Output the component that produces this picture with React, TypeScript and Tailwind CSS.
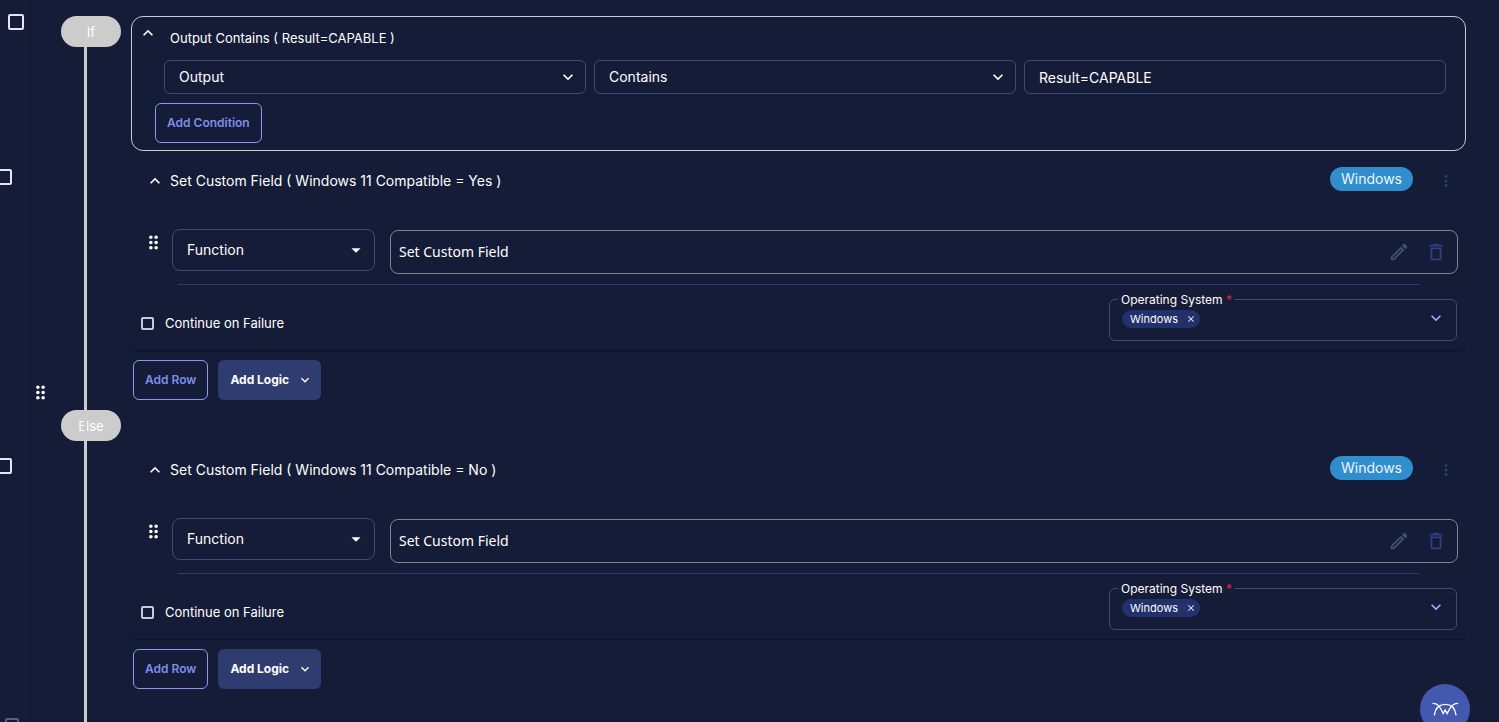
import type { ReactNode } from 'react'
import {
  MdArrowDropDown,
  MdClose,
  MdDeleteOutline,
  MdDragIndicator,
  MdExpandLess,
  MdExpandMore,
  MdMoreVert,
  MdOutlineEdit,
} from 'react-icons/md'

const RAIL_CHECKBOX = 'block shrink-0 appearance-none rounded-xs border-2'

function SelectionRail() {
  return (
    <aside className="flex w-[30px] shrink-0 flex-col overflow-hidden border-r border-[#131932] pt-3.5">
      <input type="checkbox" aria-label="Select condition" className={`${RAIL_CHECKBOX} ml-2 size-4 border-[#e3e6f5]`} />
      <input type="checkbox" aria-label="Select first row" className={`${RAIL_CHECKBOX} mt-[139px] -ml-1 size-4 border-[#e3e6f5]`} />
      <input type="checkbox" aria-label="Select second row" className={`${RAIL_CHECKBOX} mt-[273px] -ml-1 size-4 border-[#e3e6f5]`} />
      <input type="checkbox" aria-label="Select next row" className={`${RAIL_CHECKBOX} mt-[244px] ml-[5px] size-3.5 border-[#5b6078]`} />
    </aside>
  )
}

function ConditionSelect({ label, value }: { label: string; value: string }) {
  return (
    <div className="relative">
      <select
        aria-label={label}
        className="h-[34px] w-full appearance-none rounded-md border border-[#3e4a7a] bg-transparent px-3.5 text-sm text-white"
      >
        <option>{value}</option>
      </select>
      <MdExpandMore className="pointer-events-none absolute top-[7px] right-2 size-5" />
    </div>
  )
}

function OutlineButton({ children }: { children: ReactNode }) {
  return (
    <button className="h-10 rounded-md border border-[#869bed] px-[11px] text-xs font-semibold text-[#7b8fec]">
      {children}
    </button>
  )
}

function ConditionBox() {
  return (
    <section className="flex h-[135px] rounded-xl border border-[#cccccc] pr-[19px]">
      <button aria-label="Collapse condition" className="h-8 w-[23px] shrink-0 pl-1.5">
        <MdExpandLess className="size-5" />
      </button>
      <div className="flex-1">
        <h2 className="mt-[11px] ml-[15px] text-[13px] leading-5">Output Contains ( Result=CAPABLE )</h2>
        <div className="mt-3 ml-[9px] grid grid-cols-3 gap-2">
          <ConditionSelect label="Source" value="Output" />
          <ConditionSelect label="Operator" value="Contains" />
          <input
            aria-label="Value"
            defaultValue="Result=CAPABLE"
            className="h-[34px] w-full rounded-md border border-[#3e4a7a] bg-transparent px-3.5 text-sm text-white"
          />
        </div>
        <div className="mt-[9px]">
          <OutlineButton>Add Condition</OutlineButton>
        </div>
      </div>
    </section>
  )
}

function OperatingSystemField() {
  return (
    <fieldset className="h-[51px] w-[348px] rounded-md border border-[#3e4a7a] px-2">
      <legend className="px-[3px] pt-0.5 text-xs leading-4">
        Operating System <span className="text-[#e0263c]">*</span>
      </legend>
      <div className="flex items-start justify-between pl-1">
        <span className="mt-0.5 flex h-[18px] items-center gap-2 rounded-full bg-[#22306b] pr-1 pl-2 text-[11px]">
          Windows
          <button aria-label="Remove Windows">
            <MdClose className="size-2.5" />
          </button>
        </span>
        <button aria-label="Open operating systems" className="pr-0.5 text-[#9dafff]">
          <MdExpandMore className="size-5" />
        </button>
      </div>
    </fieldset>
  )
}

function StepCard({ id, title }: { id: string; title: string }) {
  return (
    <section className="h-[189px] rounded-md pr-2 shadow-[0_1px_1px_#0d1226]">
      <div className="flex h-[68px] items-start pt-1.5 pr-[3px]">
        <button aria-label="Collapse step" className="flex h-7 w-[39px] items-center pl-3.5">
          <MdExpandLess className="size-5" />
        </button>
        <h3 className="flex-1 text-sm leading-7">{title}</h3>
        <span className="h-6 rounded-full bg-[#308ecd] px-[11px] text-sm leading-6 text-[#eef4fb]">Windows</span>
        <button aria-label="Step menu" className="ml-6 flex h-7 items-center text-[#2c3c75]">
          <MdMoreVert className="size-[18px]" />
        </button>
      </div>

      <div className="flex h-[55px]">
        <MdDragIndicator className="mt-[3px] mr-2 ml-3 size-[21px] shrink-0" />
        <div className="relative w-[203px]">
          <select
            aria-label="Step type"
            className="h-[42px] w-full appearance-none rounded-lg border border-[#3e4a7a] bg-transparent px-3.5 text-sm text-white"
          >
            <option>Function</option>
          </select>
          <MdArrowDropDown className="pointer-events-none absolute top-2.5 right-2 size-[22px]" />
        </div>
        <div className="mt-px ml-[15px] flex h-11 flex-1 items-center rounded-lg border border-[#84828c] pr-2.5 pl-2">
          <span className="flex-1 font-['Noto_Sans',sans-serif] text-sm">Set Custom Field</span>
          <button aria-label="Edit function" className="text-[#454e78]">
            <MdOutlineEdit className="size-[22px]" />
          </button>
          <button aria-label="Delete function" className="ml-[15px] text-[#2d3f86]">
            <MdDeleteOutline className="size-[22px]" />
          </button>
        </div>
      </div>

      <hr className="mr-[39px] ml-[47px] border-[#303c6a]" />

      <div className="flex items-start justify-between pt-[5px] pr-px pl-2.5">
        <div className="flex h-[66px] items-center gap-[11px]">
          <input id={id} type="checkbox" className="size-[13px] appearance-none rounded-xs border-2 border-[#c6cadb]" />
          <label htmlFor={id} className="text-[13px] leading-5">
            Continue on Failure
          </label>
        </div>
        <OperatingSystemField />
      </div>
    </section>
  )
}

function BranchActions() {
  return (
    <div className="mt-2.5 flex gap-2.5 pl-0.5">
      <OutlineButton>Add Row</OutlineButton>
      <button className="flex h-10 items-center gap-2 rounded-md bg-[#2f3c70] pr-2 pl-3 text-xs font-bold">
        Add Logic
        <MdExpandMore className="size-4" />
      </button>
    </div>
  )
}

function Branch({ name, children }: { name: string; children: ReactNode }) {
  return (
    <div className="flex gap-2.5">
      <div className="h-[31px] w-[60px] shrink-0 rounded-full bg-[#cccccc] text-center text-[13px] leading-8">
        {name}
      </div>
      <div className="min-w-0 flex-1 pb-2.5">{children}</div>
    </div>
  )
}

function AssistantButton() {
  return (
    <button
      aria-label="Open assistant"
      className="fixed right-[29px] -bottom-3 flex size-[50px] items-center justify-center rounded-full bg-[#4359ad]"
    >
      <svg viewBox="0 0 80 40" className="w-[27px] fill-none stroke-white" strokeWidth="4" strokeLinecap="round">
        <path d="M3 4C16 4 23 12 33 34L39 24L45 34C56 12 63 4 76 4" />
        <path d="M7 38C10 20 20 7 40 7S68 20 71 38" />
      </svg>
    </button>
  )
}

export default function App() {
  return (
    <main className="flex h-screen overflow-hidden bg-[#151c38] font-['Inter',sans-serif] text-white">
      <SelectionRail />
      <div className="w-[31px] shrink-0 pt-[382px]">
        <MdDragIndicator className="size-[21px]" />
      </div>
      <div className="relative min-w-0 flex-1 pt-4 pr-[33px]">
        <Branch name="If">
          <ConditionBox />
          <div className="mt-2.5">
            <StepCard id="continue-yes" title="Set Custom Field ( Windows 11 Compatible = Yes )" />
          </div>
          <BranchActions />
        </Branch>
        <Branch name="Else">
          <div className="mt-10">
            <StepCard id="continue-no" title="Set Custom Field ( Windows 11 Compatible = No )" />
          </div>
          <BranchActions />
        </Branch>
        {/* connector runs across the pills */}
        <div className="absolute top-8 bottom-0 left-[23px] w-[3px] bg-[#cccccc]" />
      </div>
      <AssistantButton />
    </main>
  )
}
